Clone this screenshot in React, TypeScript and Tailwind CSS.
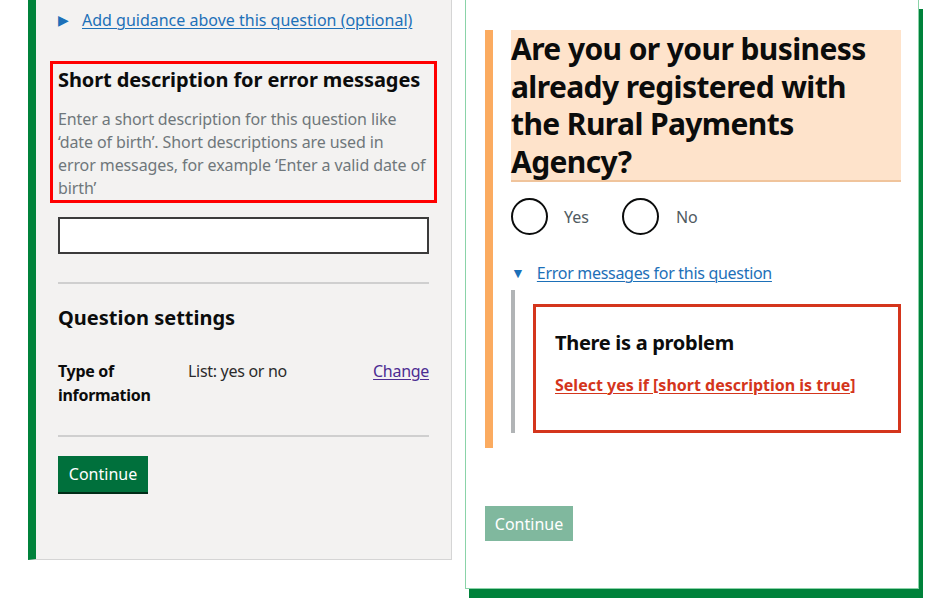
export default function App() {
  const font = { fontFamily: "'Noto Sans', 'Open Sans', sans-serif" };
  return (
    <div
      className="w-[938px] h-[608px] bg-white overflow-hidden flex items-start text-[#0b0c0c]"
      style={font}
    >
      {/* left: question editor panel */}
      <div className="ml-[28px] w-[424px] h-[560px] bg-[#f3f2f1] border-l-8 border-l-[#00823b] border-r border-b border-r-[#d5d5d5] border-b-[#d5d5d5] px-[22px] pt-[8px]">
        <div className="flex items-center gap-[13px] h-[24px]">
          <span className="text-[#1d70b8] text-[14px] leading-none">▶</span>
          <a className="text-[16px] text-[#1d70b8] underline underline-offset-2 decoration-1">
            Add guidance above this question (optional)
          </a>
        </div>

        <div className="mt-[29px] -mx-[8px] border-[3px] border-[#ff0000] px-[5px] pt-[2px]">
          <h2 className="text-[20px] leading-[28px] font-bold tracking-[-0.1px]">Short description for error messages</h2>
          <p className="mt-[14px] text-[16px] leading-[23px] tracking-[-0.1px] text-[#6f777b]">
            Enter a short description for this question like
            <br />
            ‘date of birth’. Short descriptions are used in
            <br />
            error messages, for example ‘Enter a valid date of
            <br />
            birth’
          </p>
        </div>

        <div className="mt-[14px] h-[37px] border-2 border-[#3b3b3b] bg-white" />

        <div className="mt-[28px] h-[2px] bg-[#cfcfcf]" />

        <h2 className="mt-[20px] text-[20px] leading-[28px] font-bold">Question settings</h2>

        <div className="mt-[27px] flex text-[16px] leading-[24px] tracking-[-0.3px]">
          <div className="w-[130px] font-bold">
            Type of
            <br />
            information
          </div>
          <div className="flex-1 text-[#2b2b2b]">List: yes or no</div>
          <a className="text-[#4c2c92] underline underline-offset-2 decoration-1">Change</a>
        </div>

        <div className="mt-[28px] h-[2px] bg-[#cfcfcf]" />

        <button className="mt-[19px] h-[36px] w-[90px] bg-[#00703c] text-white text-[16px] shadow-[0_2px_0_#002d18]">
          Continue
        </button>
      </div>

      {/* right: preview card */}
      <div className="ml-[13px] w-[454px] h-[589px] bg-white border-l border-b border-r border-[#8ad3a8] shadow-[4px_9px_0_#00823b] pl-[19px] pr-[17px]">
        <div className="mt-[30px] border-l-8 border-[#fbab60] pl-[18px] pb-[15px]">
          <h1 className="bg-[#fee3cb] border-b-2 border-[#f0c49c] text-[30px] leading-[37.5px] font-bold tracking-[-0.6px]">
            Are you or your business already registered with the Rural Payments Agency?
          </h1>

          <div className="mt-[16px] flex items-center">
            <span className="w-[37px] h-[37px] rounded-full border-2 border-[#0b0c0c]" />
            <span className="ml-[16px] text-[16px] text-[#505a5f]">Yes</span>
            <span className="ml-[33px] w-[37px] h-[37px] rounded-full border-2 border-[#0b0c0c]" />
            <span className="ml-[17px] text-[16px] text-[#505a5f]">No</span>
          </div>

          <div className="mt-[27px] flex items-center gap-[12px] h-[22px]">
            <span className="text-[#1d70b8] text-[14px] leading-none">▼</span>
            <a className="text-[16px] tracking-[-0.3px] text-[#1d70b8] underline underline-offset-2 decoration-1">
              Error messages for this question
            </a>
          </div>

          <div className="mt-[6px] border-l-4 border-[#b1b4b6] pl-[18px] pt-[14px]">
            <div className="h-[129px] border-[3px] border-[#d4351c] pl-[19px] pt-[22px]">
              <h2 className="text-[20px] leading-[28px] font-bold tracking-[-0.3px]">There is a problem</h2>
              <a className="mt-[16px] block text-[16px] font-bold text-[#d4351c] underline underline-offset-2 decoration-1">
                Select yes if [short description is true]
              </a>
            </div>
          </div>
        </div>

        <button className="mt-[58px] h-[35px] w-[88px] bg-[#80b89e] text-white text-[16px]">Continue</button>
      </div>
    </div>
  );
}
